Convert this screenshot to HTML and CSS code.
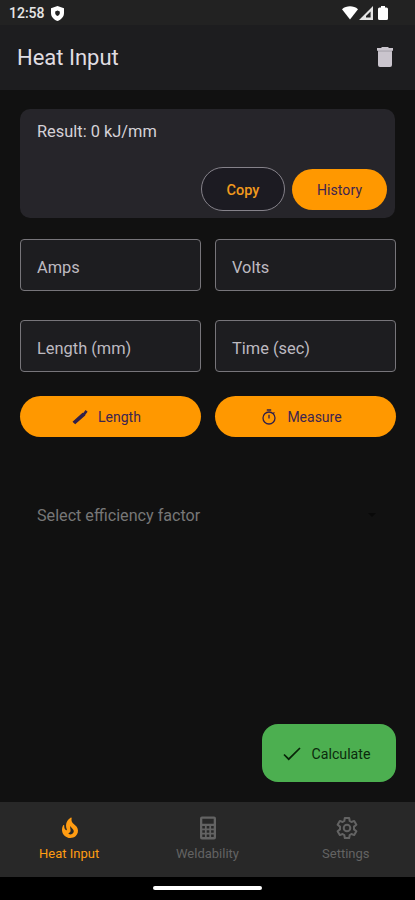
FILE: index.html
```html
<!DOCTYPE html>
<html lang="en">
<head>
<meta charset="utf-8">
<title>Heat Input</title>
<link rel="stylesheet" href="styles.css">
</head>
<body>
<div class="status">
  <span class="clock">12:58</span>
  <svg class="shield" viewBox="0 0 13 15"><path fill="#fff" fill-rule="evenodd" d="M6.5 0 13 2.2V7c0 3.800-2.600 6.500-6.500 8C2.600 13.500 0 10.800 0 7V2.200zM6.500 4.600 4.200 5.600v1.600c0 1.200.9 2.100 2.300 2.700 1.400-.6 2.300-1.500 2.300-2.700V5.600z"/></svg>
  <span class="signals">
    <svg width="16" height="14" viewBox="0 0 16 14"><path fill="#fff" d="M0 3.200C4.500-.6 11.500-.6 16 3.200L8 13.500z"/></svg>
    <svg width="14" height="14" viewBox="0 0 14 14"><path fill="#e4e4e4" fill-rule="evenodd" d="M14 0v14H0zM11.600 5.600 7 10v1.600h4.600z"/></svg>
    <svg class="battery" width="10" height="14" viewBox="0 0 10 14"><path fill="#fff" d="M3 0h4v1.500h1.500Q10 1.500 10 3v9.500Q10 14 8.500 14h-7Q0 14 0 12.500V3Q0 1.500 1.500 1.500H3z"/></svg>
  </span>
</div>
<header class="appbar">
  <h1>Heat Input</h1>
  <svg width="16" height="20" viewBox="0 0 16 20"><path fill="#cac5cd" d="M5 0h6l1 1h4v2.800h-1V18q0 2-2 2H3q-2 0-2-2V3.800H0V1h4z"/><path fill="#9f9ba2" d="M1 3.600h14v.9H1z"/></svg>
</header>
<main>
  <section class="card">
    <p>Result: 0 kJ/mm</p>
    <div class="actions">
      <button class="copy">Copy</button>
      <button class="pill history">History</button>
    </div>
  </section>
  <div class="grid">
    <div class="field">Amps</div>
    <div class="field">Volts</div>
    <div class="field">Length (mm)</div>
    <div class="field">Time (sec)</div>
    <button class="pill"><svg width="16" height="16" viewBox="0 0 16 16"><path fill="#30204a" d="M.5 12.800 10.500 3.800l.8.300L13.600 1l2 1.700-2.300 3-.1.800L3.200 15.300z"/></svg><span>Length</span></button>
    <button class="pill"><svg width="16" height="16" viewBox="0 0 16 16" fill="none" stroke="#30204a" stroke-width="1.300"><circle cx="8" cy="9" r="6"/><path d="M5.800 1h4.400M8 5.800v3.700M12.200 4.600l1.200-1.200"/></svg><span>Measure</span></button>
  </div>
  <div class="select"><span>Select efficiency factor</span><svg width="8" height="4" viewBox="0 0 8 4"><path fill="#090909" d="M0 0h8L4 4z"/></svg></div>
  <button class="fab"><svg width="18" height="14" viewBox="0 0 18 14"><path fill="none" stroke="#082408" stroke-width="1.700" d="m1 7.500 4.700 4.700L17 1"/></svg><span>Calculate</span></button>
</main>
<nav>
  <a class="active"><svg width="24" height="24" viewBox="0 0 24 24"><path fill="currentColor" d="M19.480 12.350c-1.570-4.080-7.160-4.300-5.810-10.230.1-.44-.37-.78-.75-.55C9.290 3.710 6.680 8 8.870 13.620c.18.460-.36.890-.75.590-1.810-1.370-2-3.340-1.840-4.750.06-.52-.62-.77-.91-.34C4.690 10.160 4 11.840 4 14.370c.38 5.600 5.110 7.320 6.810 7.540 2.430.31 5.060-.14 6.950-1.870 2.080-1.930 2.840-5.010 1.720-7.690zm-9.280 5.030c1.440-.35 2.180-1.390 2.380-2.310.33-1.430-.96-2.830-.09-5.090.33 1.870 3.270 3.040 3.270 5.080.08 2.530-2.660 4.700-5.560 2.320z"/></svg><span>Heat Input</span></a>
  <a><svg width="24" height="24" viewBox="0 0 24 24"><path fill="currentColor" fill-rule="evenodd" d="M6 .5h12a2 2 0 0 1 2 2v19a2 2 0 0 1-2 2H6a2 2 0 0 1-2-2v-19a2 2 0 0 1 2-2zM6.300 2.800v4.900h11.400V2.800zM6.300 10v2.500h2.600V10zm4.400 0v2.500h2.600V10zm4.400 0v2.500h2.600V10zM6.300 14.200v2.500h2.600v-2.500zm4.400 0v2.500h2.600v-2.500zm4.400 0v2.500h2.600v-2.500zM6.300 18.400v2.500h2.600v-2.500zm4.400 0v2.500h2.600v-2.500zm4.400 0v2.500h2.600v-2.500z"/></svg><span>Weldability</span></a>
  <a><svg width="24" height="24" viewBox="0 0 24 24" fill="none" stroke="currentColor" stroke-width="2" stroke-linejoin="round"><circle cx="12" cy="12" r="3.300"/><path d="M9.800 2h4.400l.5 3 1.700 1 2.800-1.100 2.200 3.800L19 10.600v2.800l2.400 1.900-2.200 3.800-2.800-1.100-1.700 1-.5 3H9.800l-.5-3-1.700-1-2.800 1.100-2.200-3.800L5 13.400v-2.800L2.600 8.700l2.200-3.800L7.600 6l1.700-1z"/></svg><span>Settings</span></a>
</nav>
<div class="home"><i></i></div>
</body>
</html>
```

FILE: styles.css
```css
* { box-sizing: border-box; }
body {
  margin: 0;
  width: 415px;
  height: 900px;
  display: flex;
  flex-direction: column;
  overflow: hidden;
  background: #111;
  color: #d5d2d8;
  font-family: Roboto, sans-serif;
}
svg { display: block; flex: none; }
button { border: 0; padding: 0; font: inherit; }
h1, p { margin: 0; font-weight: 400; }

.status {
  height: 25px;
  padding: 1px 27px 0 9px;
  display: flex;
  align-items: center;
  background: #222;
  color: #e6e6e6;
}
.clock { width: 42px; font-size: 14px; font-weight: 500; }
.shield { width: 13px; height: 15px; }
.signals { margin-left: auto; display: flex; gap: 1px; }
.battery { margin-left: 4px; }

.appbar {
  height: 65px;
  padding: 0 22px 2px 17px;
  display: flex;
  align-items: center;
  justify-content: space-between;
  background: #1d1d1f;
}
.appbar h1 { padding-top: 2px; font-size: 22px; color: #e0dde2; }

main {
  height: 712px;
  padding: 19px 19px 0 20px;
  display: flex;
  flex-direction: column;
}
.card {
  height: 109px;
  width: 375px;
  padding: 13px 8px 7px 17px;
  border-radius: 10px;
  display: flex;
  flex-direction: column;
  justify-content: space-between;
  background: #26252a;
}
.card p { font-size: 16.400px; line-height: 20px; }
.actions {
  display: flex;
  justify-content: flex-end;
  align-items: center;
  gap: 7px;
  font-size: 14.500px;
}
.copy {
  width: 84px;
  height: 44px;
  padding-top: 2px;
  border: 1px solid #85828a;
  border-radius: 22px;
  background: #1c1b22;
  color: #f29a1d;
  font-weight: 500;
}
.pill {
  height: 41px;
  padding-top: 1px;
  border-radius: 21px;
  display: flex;
  align-items: center;
  justify-content: center;
  gap: 10px;
  background: #ff9800;
  color: #3d2450;
  font-size: 14px;
}
.history { width: 95px; letter-spacing: .1px; }

.grid {
  margin-top: 21px;
  display: grid;
  grid-template-columns: 181px 181px;
  grid-template-rows: 52px 52px 41px;
  gap: 29px 14px;
}
.grid .pill { margin-top: -5px; padding-right: 8px; }
.field {
  padding: 5px 16px 0;
  display: flex;
  align-items: center;
  border: 1px solid #77757a;
  border-radius: 4px;
  background: #1d1d20;
  color: #bdbac0;
  font-size: 16.400px;
}
.select {
  margin-top: 63px;
  padding: 0 20px 0 17px;
  height: 20px;
  display: flex;
  align-items: center;
  justify-content: space-between;
  color: #777;
  font-size: 16.150px;
}
.fab {
  width: 134px;
  height: 58px;
  margin: auto 0 20px auto;
  padding: 2px 5px 0 0;
  border-radius: 16px;
  display: flex;
  align-items: center;
  justify-content: center;
  gap: 11px;
  background: #4caf50;
  color: #0b2a0c;
  font-size: 14.200px;
}

nav {
  height: 75px;
  display: grid;
  grid-template-columns: repeat(3, 1fr);
  background: #282828;
  color: #636363;
  font-size: 13px;
}
nav a {
  padding-top: 14px;
  display: flex;
  flex-direction: column;
  align-items: center;
  gap: 6px;
  line-height: 16px;
}
nav svg { margin-left: 2px; }
.active { color: #ff9c12; }

.home {
  height: 23px;
  display: flex;
  justify-content: center;
  padding-top: 9px;
  background: #000;
}
.home i { width: 109px; height: 4px; border-radius: 2px; background: #fff; }
```
